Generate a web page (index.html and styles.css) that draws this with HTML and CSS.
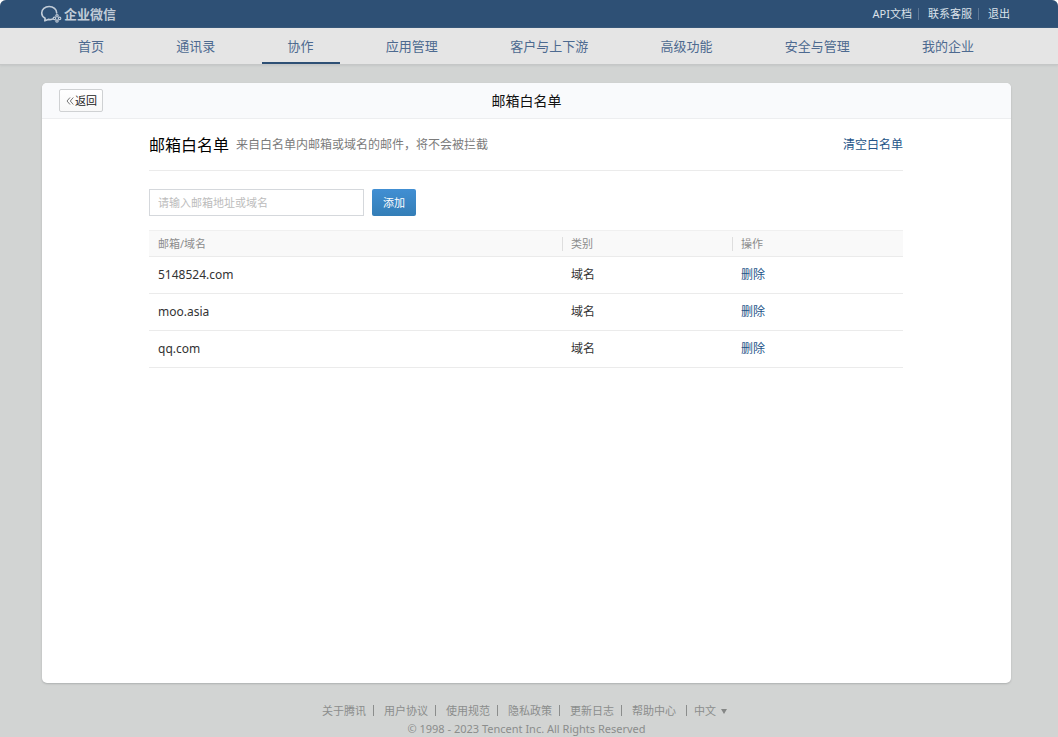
FILE: index.html
```html
<!DOCTYPE html>
<html lang="zh-CN">
<head>
<meta charset="utf-8">
<meta name="viewport" content="width=device-width, initial-scale=1">
<title>邮箱白名单</title>
<link rel="stylesheet" href="styles.css">
</head>
<body>
<div class="page">
  <header class="topbar">
    <a class="logo" href="#">
      <svg class="logo-icon" viewBox="0 0 22 18" aria-hidden="true">
        <path d="M12.600 14C11 14.700 9.600 14.700 8.200 14.400L4.800 15.800L5.100 13.300C2.900 12.100 1.700 10.200 1.700 8C1.700 4.300 5 1.500 9.200 1.500C13.400 1.500 16.700 4.300 16.700 8" fill="none" stroke="currentColor" stroke-width="1.600" stroke-linecap="round" stroke-linejoin="round"/>
        <g fill="none" stroke="currentColor" stroke-width="1.200">
          <circle cx="17" cy="10.800" r="1.200"/>
          <circle cx="19.600" cy="13.400" r="1.200"/>
          <circle cx="17" cy="16" r="1.200"/>
          <circle cx="14.400" cy="13.400" r="1.200"/>
        </g>
      </svg>
      <span>企业微信</span>
    </a>
    <nav class="toplinks" aria-label="账户">
      <a href="#">API文档</a>
      <a href="#">联系客服</a>
      <a href="#">退出</a>
    </nav>
  </header>

  <nav class="mainnav" aria-label="主导航">
    <a href="#">首页</a>
    <a href="#">通讯录</a>
    <a class="active" href="#" aria-current="page">协作</a>
    <a href="#">应用管理</a>
    <a href="#">客户与上下游</a>
    <a href="#">高级功能</a>
    <a href="#">安全与管理</a>
    <a href="#">我的企业</a>
  </nav>

  <main class="card">
    <div class="card-head">
      <button class="back" type="button">
        <svg class="back-icon" viewBox="0 0 8 8" aria-hidden="true"><path d="M4 0.500L1 4L4 7.500M7.300 0.500L4.300 4L7.300 7.500" fill="none" stroke="currentColor"/></svg>
        <span>返回</span>
      </button>
      <h1 class="card-title">邮箱白名单</h1>
    </div>
    <div class="card-body">
      <div class="section-head">
        <h2 class="section-title">邮箱白名单</h2>
        <p class="section-note">来自白名单内邮箱或域名的邮件，将不会被拦截</p>
        <a class="clear" href="#">清空白名单</a>
      </div>
      <form class="add-form">
        <input class="add-input" type="text" placeholder="请输入邮箱地址或域名" aria-label="邮箱地址或域名">
        <button class="add-button" type="button">添加</button>
      </form>
      <table class="list">
        <thead>
          <tr>
            <th class="col-name" scope="col">邮箱/域名</th>
            <th class="col-type" scope="col"><span class="divided">类别</span></th>
            <th scope="col"><span class="divided">操作</span></th>
          </tr>
        </thead>
        <tbody>
          <tr><td>5148524.com</td><td>域名</td><td><a href="#">删除</a></td></tr>
          <tr><td>moo.asia</td><td>域名</td><td><a href="#">删除</a></td></tr>
          <tr><td>qq.com</td><td>域名</td><td><a href="#">删除</a></td></tr>
        </tbody>
      </table>
    </div>
  </main>

  <footer class="footer">
    <div class="footer-links">
      <a href="#">关于腾讯</a>
      <a href="#">用户协议</a>
      <a href="#">使用规范</a>
      <a href="#">隐私政策</a>
      <a href="#">更新日志</a>
      <a href="#">帮助中心</a>
      <button class="language" type="button">中文<span class="caret"></span></button>
    </div>
    <p class="copyright">© 1998 - 2023 Tencent Inc. All Rights Reserved</p>
  </footer>
</div>
</body>
</html>
```
FILE: styles.css
```css
* {
  box-sizing: border-box;
}

body {
  margin: 0;
  background: #fff;
  color: #333;
  font: 12px/18px "Noto Sans", "Noto Sans CJK SC", sans-serif;
}

a {
  color: inherit;
  text-decoration: none;
}

button,
input {
  margin: 0;
  font: inherit;
}

h1,
h2,
p {
  margin: 0;
  font-weight: 400;
}

.page {
  display: flex;
  flex-direction: column;
  min-height: 100vh;
  background: #d2d4d3;
  border-radius: 6px 6px 0 0;
  overflow: hidden;
}

.topbar {
  display: flex;
  align-items: center;
  justify-content: space-between;
  height: 28px;
  padding: 0 48px 0 40px;
  background: #2e5075;
  color: #dbe2ea;
}

.logo {
  display: flex;
  align-items: center;
  gap: 2px;
  color: #c1ccd8;
  font-size: 13px;
  font-weight: 600;
  line-height: 16px;
}

.logo-icon {
  width: 22px;
  height: 18px;
}

.toplinks {
  display: flex;
  align-items: center;
  font-size: 11px;
  line-height: 12px;
}

.toplinks a + a {
  margin-left: 6px;
  padding-left: 9px;
  border-left: 1px solid #5d7896;
}

.mainnav {
  display: flex;
  justify-content: space-between;
  height: 37px;
  padding: 0 58px 0 52px;
  background: #e5e5e5;
  border-bottom: 1px solid #c5c7c7;
  box-shadow: 0 1px 2px #c4c6c6;
  color: #4d6a90;
  font-size: 13px;
  line-height: 36px;
}

.mainnav a {
  padding: 0 26px;
  white-space: nowrap;
}

.mainnav .active {
  border-bottom: 2px solid #2e5075;
}

.card {
  flex: 1;
  margin: 18px 47px 0 42px;
  background: #fff;
  border-radius: 5px;
  box-shadow: 0 1px 2px #adafaf;
}

.card-head {
  display: grid;
  grid-template-columns: 1fr auto 1fr;
  align-items: center;
  height: 36px;
  padding: 0 17px;
  background: #f9fafc;
  border-bottom: 1px solid #edeef0;
  border-radius: 5px 5px 0 0;
}

.back {
  display: flex;
  align-items: center;
  justify-self: start;
  gap: 1px;
  height: 23px;
  padding: 0 5px 0 6px;
  background: linear-gradient(#fff, #f8f8f8);
  border: 1px solid #cfd1d3;
  border-radius: 2px;
  color: #222;
  font-size: 11px;
}

.back-icon {
  width: 8px;
  height: 8px;
  color: #777;
}

.card-title {
  color: #111;
  font-size: 14px;
}

.card-body {
  padding: 0 108px 0 107px;
}

.section-head {
  display: flex;
  align-items: center;
  gap: 7px;
  height: 52px;
  border-bottom: 1px solid #ebebeb;
}

.section-title {
  color: #000;
  font-size: 16px;
}

.section-note {
  color: #7b7b7b;
}

.clear {
  margin-left: auto;
}

.clear,
.list a {
  color: #245488;
}

.add-form {
  display: flex;
  gap: 8px;
  padding: 18px 0 14px;
}

.add-input {
  width: 215px;
  height: 27px;
  padding: 0 8px;
  background: #fff;
  border: 1px solid #d5d8dc;
  border-radius: 0;
  color: #333;
  font-size: 11px;
}

.add-input::placeholder {
  color: #bcbcbc;
}

.add-button {
  width: 44px;
  height: 27px;
  padding: 0;
  background: linear-gradient(#418fd3, #347eb7);
  border: 0;
  border-radius: 2px;
  color: #fff;
  font-size: 11px;
}

.list {
  width: 100%;
  table-layout: fixed;
  border-collapse: collapse;
  text-align: left;
}

.list th {
  height: 26px;
  padding: 0;
  background: #f9f9f9;
  border-top: 1px solid #f0f0f0;
  border-bottom: 1px solid #ebebeb;
  color: #8c8c8c;
  font-size: 11px;
  font-weight: 400;
  line-height: 14px;
}

.list .col-name {
  width: 413px;
  padding-left: 9px;
}

.list .col-type {
  width: 170px;
}

.list .divided {
  display: block;
  padding-left: 8px;
  border-left: 1px solid #dedede;
}

.list td {
  height: 37px;
  padding: 0 0 0 9px;
  border-bottom: 1px solid #ebebeb;
}

.footer {
  padding: 19px 5px 0 0;
  color: #8b8d8c;
  font-size: 11px;
  text-align: center;
}

.footer-links {
  display: flex;
  align-items: center;
  justify-content: center;
  padding-right: 4px;
  line-height: 18px;
}

.footer-links a::after {
  content: "";
  display: inline-block;
  width: 1px;
  height: 11px;
  margin: 0 10px 0 7px;
  background: #8b8d8c;
  vertical-align: -1px;
}

.footer-links a:nth-last-child(2)::after {
  margin: 0 7px 0 10px;
}

.language {
  display: flex;
  align-items: center;
  gap: 5px;
  padding: 0;
  background: none;
  border: 0;
  color: inherit;
}

.caret {
  border: 3px solid transparent;
  border-top: 5px solid #858786;
  border-bottom: 0;
}

.copyright {
  line-height: 17px;
}
```
